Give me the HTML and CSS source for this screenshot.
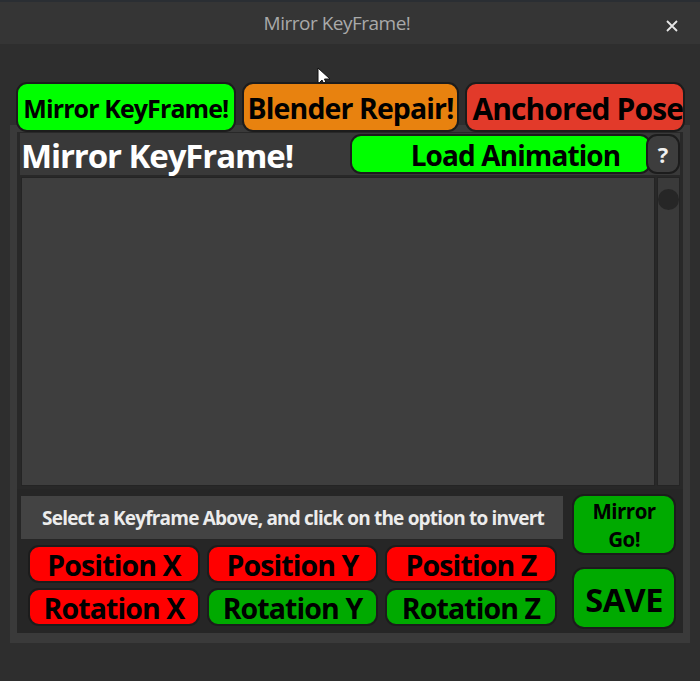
FILE: index.html
```html
<!DOCTYPE html>
<html>
<head>
<meta charset="utf-8">
<link rel="stylesheet" href="styles.css">
</head>
<body>
<div class="window">
  <div class="titlebar">
    <span class="title">Mirror KeyFrame!</span>
    <svg class="close" width="14" height="14" viewBox="0 0 14 14"><path d="M2 2 L12 12 M12 2 L2 12" stroke="#e6e6e6" stroke-width="1.8" fill="none"/></svg>
  </div>
  <div class="main">
    <div class="tabs">
      <div class="tab tab-green">Mirror KeyFrame!</div>
      <div class="tab tab-orange">Blender Repair!</div>
      <div class="tab tab-red">Anchored Pose</div>
    </div>
    <div class="panel">
      <div class="inner">
        <div class="header">
          <div class="heading">Mirror KeyFrame!</div>
          <div class="load-wrap">
            <div class="load">Load Animation</div>
            <div class="help">?</div>
          </div>
        </div>
        <div class="listrow">
          <div class="list"></div>
          <div class="scroll"><div class="thumb"></div></div>
        </div>
        <div class="bottom">
          <div class="left">
            <div class="info">Select a Keyframe Above, and click on the option to invert</div>
            <div class="grid">
              <div class="opt red">Position X</div>
              <div class="opt red">Position Y</div>
              <div class="opt red">Position Z</div>
              <div class="opt red">Rotation X</div>
              <div class="opt green">Rotation Y</div>
              <div class="opt green">Rotation Z</div>
            </div>
          </div>
          <div class="right">
            <div class="act go"><span class="line">Mirror</span><span class="line">Go!</span></div>
            <div class="act save">SAVE</div>
          </div>
        </div>
      </div>
    </div>
  </div>
  <svg class="cursor" width="14" height="22" viewBox="0 0 14 22"><path d="M1 1 L1 17 L5 13 L8 20 L10.5 19 L7.5 12 L13 12 Z" fill="#fff" stroke="#111" stroke-width="1"/></svg>
</div>
</body>
</html>
```
FILE: styles.css
```css
* { box-sizing: border-box; }
html, body { margin: 0; padding: 0; }
body {
  width: 700px;
  height: 681px;
  background: #2e2e2e;
  font-family: "Open Sans", Lato, sans-serif;
  overflow: hidden;
}
.window { position: relative; width: 700px; height: 681px; }
.titlebar {
  height: 44px;
  background: #353535;
  border-top: 2px solid #2a2e33;
  display: flex;
  align-items: center;
  justify-content: center;
  position: relative;
}
.title {
  color: #a9a9a9;
  font-family: "Open Sans", sans-serif;
  font-size: 19px;
  letter-spacing: -0.5px;
  margin-left: -26px;
}
.close { position: absolute; right: 21px; top: 17px; }
.main { padding: 38px 10px 0 10px; }
.tabs {
  display: flex;
  gap: 6px;
  padding: 0 5px 0 6px;
  position: relative;
  z-index: 1;
}
.tab {
  height: 50px;
  border: 2px solid #1c1c1c;
  border-radius: 11px;
  display: flex;
  align-items: center;
  justify-content: center;
  padding-top: 2px;
  font-weight: 700;
  color: #000;
  white-space: nowrap;
  overflow: hidden;
}
.tab-green { width: 220px; background: #00ff00; font-size: 25px; letter-spacing: -0.9px; }
.tab-orange { width: 218px; background: #e8820f; font-size: 28.5px; letter-spacing: -0.9px; }
.tab-red { width: 220px; background: #e23a2a; font-size: 30px; letter-spacing: -0.9px; justify-content: flex-end; padding-right: 0; }
.panel {
  margin-top: -7px;
  height: 518px;
  background: #3a3a3a;
  padding: 7px 7px 10px 7px;
}
.inner {
  height: 100%;
  background: #282828;
  padding: 1px 3px 0 3px;
  display: flex;
  flex-direction: column;
}
.header {
  height: 42px;
  background: #393939;
  display: flex;
  align-items: center;
  justify-content: space-between;
}
.heading {
  color: #fff;
  font-weight: 700;
  font-size: 33px;
  letter-spacing: -1.1px;
  padding-left: 1px;
  padding-top: 2px;
  white-space: nowrap;
}
.load-wrap { display: flex; align-items: stretch; height: 40px; }
.load {
  width: 301px;
  background: #00ff00;
  border: 2px solid #1c1c1c;
  border-radius: 11px;
  display: flex;
  align-items: center;
  justify-content: center;
  padding-left: 30px;
  padding-top: 1px;
  font-weight: 700;
  font-size: 28px;
  letter-spacing: -0.9px;
  color: #000;
  white-space: nowrap;
}
.help {
  width: 34px;
  margin-left: -5px;
  background: #3d3d3d;
  border: 2px solid #1c1c1c;
  border-radius: 11px;
  display: flex;
  align-items: center;
  justify-content: center;
  color: #f0f0f0;
  font-weight: 700;
  font-size: 22px;
  position: relative;
}
.listrow {
  height: 312px;
  margin-top: 2px;
  display: flex;
  gap: 2px;
}
.list {
  flex: 1;
  background: #3e3e3e;
  border: 1px solid #242424;
  margin-left: 1px;
}
.scroll {
  width: 23px;
  background: #3a3a3a;
  border: 1px solid #242424;
  display: flex;
  justify-content: center;
  padding-top: 11px;
}
.thumb {
  width: 21px;
  height: 21px;
  border-radius: 50%;
  background: #262626;
}
.bottom {
  flex: 1;
  background: #262626;
  margin: 3px -3px 0 -3px;
  display: flex;
  padding: 7px 7px 4px 4px;
  gap: 9px;
}
.left { width: 543px; display: flex; flex-direction: column; }
.info {
  height: 43px;
  background: #434343;
  color: #ececec;
  font-weight: 700;
  font-size: 19px;
  letter-spacing: -0.8px;
  display: flex;
  align-items: center;
  justify-content: center;
  padding-left: 2px;
  white-space: nowrap;
}
.grid {
  margin-top: 6px;
  padding-left: 7px;
  display: grid;
  grid-template-columns: 172px 171px 172px;
  grid-auto-rows: 38px;
  column-gap: 7px;
  row-gap: 5px;
}
.opt {
  border: 2px solid #1c1c1c;
  border-radius: 11px;
  display: flex;
  align-items: center;
  justify-content: center;
  padding-top: 1px;
  font-weight: 700;
  font-size: 28.5px;
  letter-spacing: -0.9px;
  color: #000;
  white-space: nowrap;
}
.red { background: #ff0000; }
.green { background: #00aa00; }
.right {
  width: 104px;
  display: flex;
  flex-direction: column;
  gap: 12px;
  margin-top: -2px;
}
.act {
  background: #00aa00;
  border: 2px solid #1c1c1c;
  border-radius: 12px;
  display: flex;
  align-items: center;
  justify-content: center;
  text-align: center;
  font-weight: 700;
  color: #000;
}
.go { height: 61px; flex-direction: column; font-size: 20.5px; letter-spacing: -0.5px; padding-top: 1px; }
.go .line { display: block; line-height: 28px; }
.save { height: 62px; font-size: 32.5px; padding-top: 2px; letter-spacing: -0.5px; }
.cursor { position: absolute; left: 317px; top: 67px; }
```
